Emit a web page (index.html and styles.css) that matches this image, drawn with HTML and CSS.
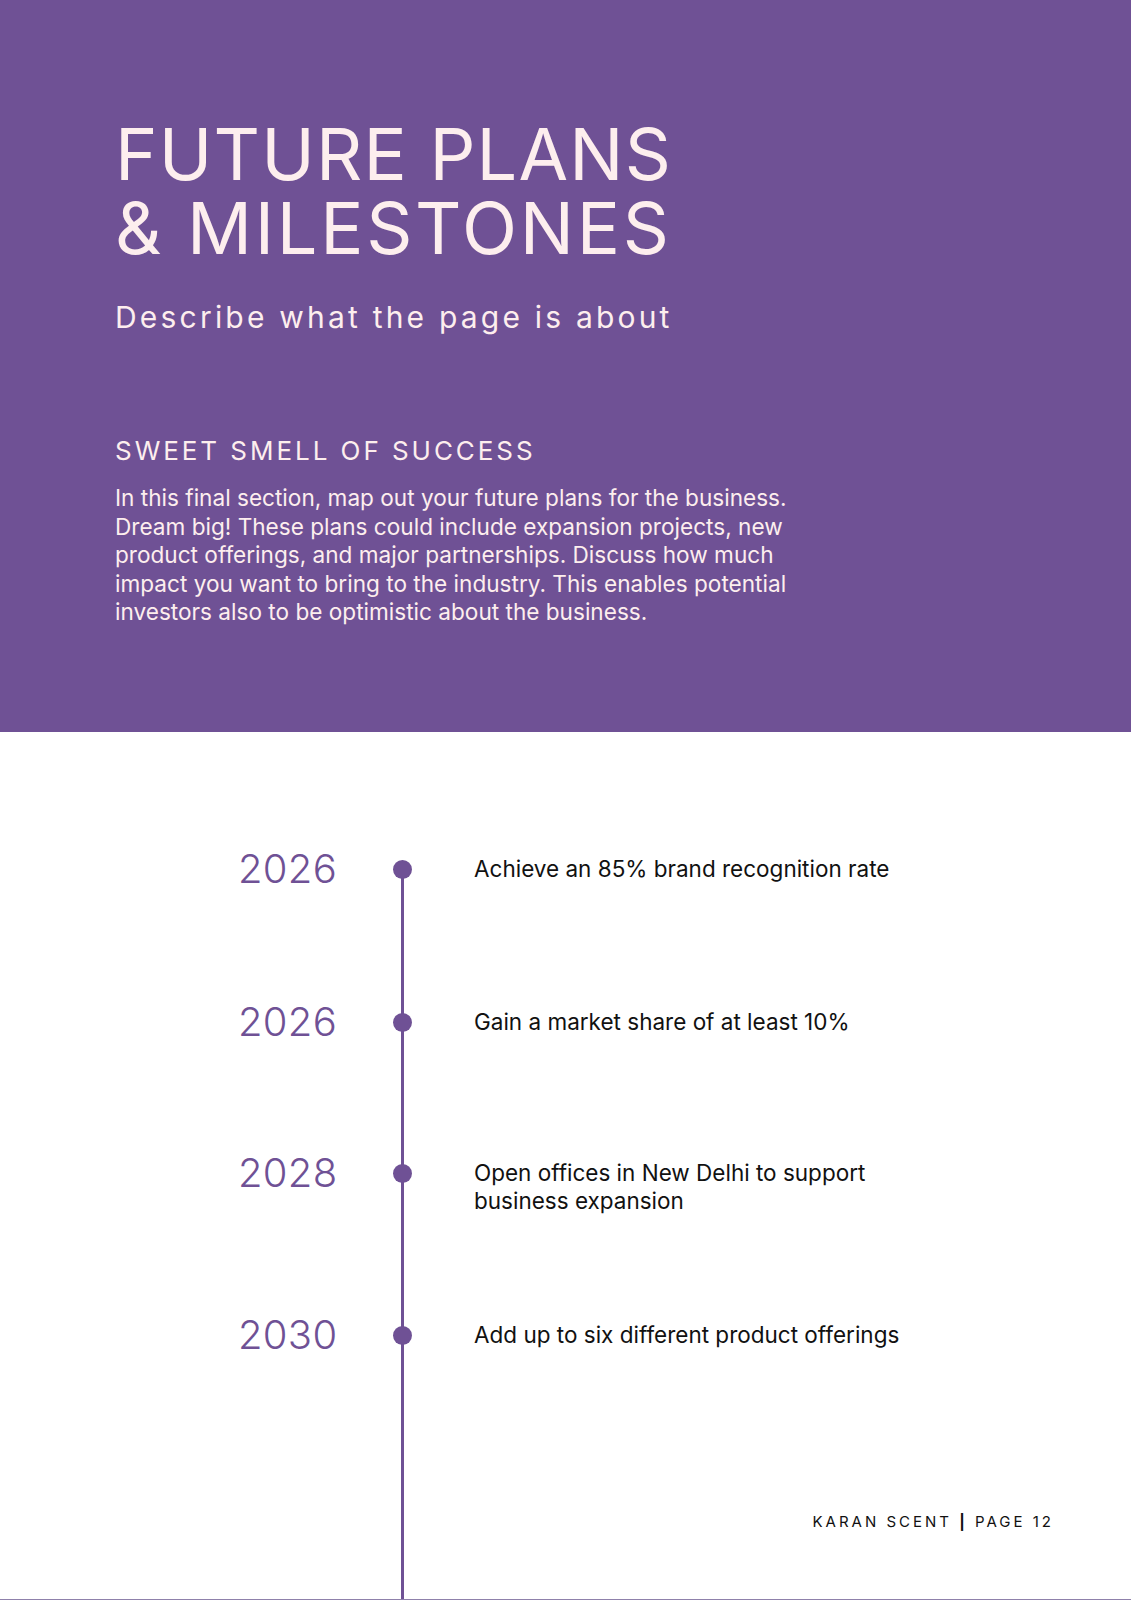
FILE: index.html
```html
<!DOCTYPE html>
<html lang="en">
<head>
<meta charset="utf-8">
<title>Future Plans &amp; Milestones</title>
<link rel="stylesheet" href="styles.css">
</head>
<body>
<div class="page">
  <header class="hero">
    <h1 class="hero-title"><span class="line">FUTURE PLANS</span><span class="line line-2">&amp; MILESTONES</span></h1>
    <p class="hero-sub">Describe what the page is about</p>
    <h2 class="hero-heading">SWEET SMELL OF SUCCESS</h2>
    <p class="hero-text">In this final section, map out your future plans for the business.<br>Dream big! These plans could include expansion projects, new<br>product offerings, and major partnerships. Discuss how much<br>impact you want to bring to the industry. This enables potential<br>investors also to be optimistic about the business.</p>
  </header>
  <section class="timeline">
    <div class="item item-1">
      <div class="year">2026</div>
      <div class="dot"></div>
      <div class="desc">Achieve an 85% brand recognition rate</div>
    </div>
    <div class="item item-2">
      <div class="year">2026</div>
      <div class="dot"></div>
      <div class="desc">Gain a market share of at least 10%</div>
    </div>
    <div class="item item-3">
      <div class="year">2028</div>
      <div class="dot"></div>
      <div class="desc">Open offices in New Delhi to support<br>business expansion</div>
    </div>
    <div class="item item-4">
      <div class="year">2030</div>
      <div class="dot"></div>
      <div class="desc">Add up to six different product offerings</div>
    </div>
    <footer class="footer">KARAN SCENT <span class="bar">|</span> PAGE 12</footer>
  </section>
</div>
</body>
</html>
```

FILE: styles.css
```css
* { box-sizing: border-box; }
html, body { margin: 0; padding: 0; background: #ffffff; }
body { font-family: Inter, "Liberation Sans", sans-serif; }

.page {
  width: 1131px;
  height: 1600px;
  overflow: hidden;
  display: flex;
  flex-direction: column;
  border-bottom: 1px solid #8f81ab;
}

.hero {
  height: 732px;
  flex: none;
  background: #6f5195;
  color: #fdeeee;
  padding: 117px 0 0 115px;
}

.hero-title {
  margin: 0;
  font-weight: 400;
  font-size: 72px;
  line-height: 74px;
  letter-spacing: 1.2px;
}
.hero-title .line { display: block; height: 74px; }
.hero-title .line-2 { letter-spacing: 2.7px; }

.hero-sub {
  margin: 32px 0 0;
  font-weight: 400;
  font-size: 30px;
  line-height: 40px;
  letter-spacing: 3.2px;
}

.hero-heading {
  margin: 98px 0 0;
  font-weight: 400;
  font-size: 26px;
  line-height: 32px;
  letter-spacing: 2.95px;
}

.hero-text {
  margin: 17px 0 0;
  font-weight: 400;
  font-size: 22.6px;
  line-height: 28.6px;
}

.timeline {
  position: relative;
  flex: 1;
  padding: 117px 0 0 238px;
}

.timeline::before {
  content: "";
  position: absolute;
  left: 400.5px;
  top: 137px;
  bottom: 0;
  width: 3px;
  background: #6f5195;
}

.item {
  display: flex;
  align-items: flex-start;
}
.item-1 { height: 153px; }
.item-2 { height: 151px; }
.item-3 { height: 162px; }
.item-4 { height: 197px; }

.year {
  width: 96px;
  flex: none;
  color: #6f5195;
  font-weight: 300;
  font-size: 40px;
  line-height: 40px;
  letter-spacing: 0.3px;
}

.dot {
  flex: none;
  width: 19px;
  height: 19px;
  margin: 10.5px 0 0 59px;
  border-radius: 50%;
  background: #6f5195;
  position: relative;
  z-index: 1;
}

.desc {
  margin: 5.7px 0 0 62px;
  color: #111111;
  font-size: 22.5px;
  line-height: 28.6px;
}

.footer {
  text-align: right;
  padding-right: 77px;
  font-size: 15px;
  line-height: 20px;
  letter-spacing: 3px;
  font-weight: 400;
  color: #111111;
}
.footer .bar { font-weight: 700; }
```
